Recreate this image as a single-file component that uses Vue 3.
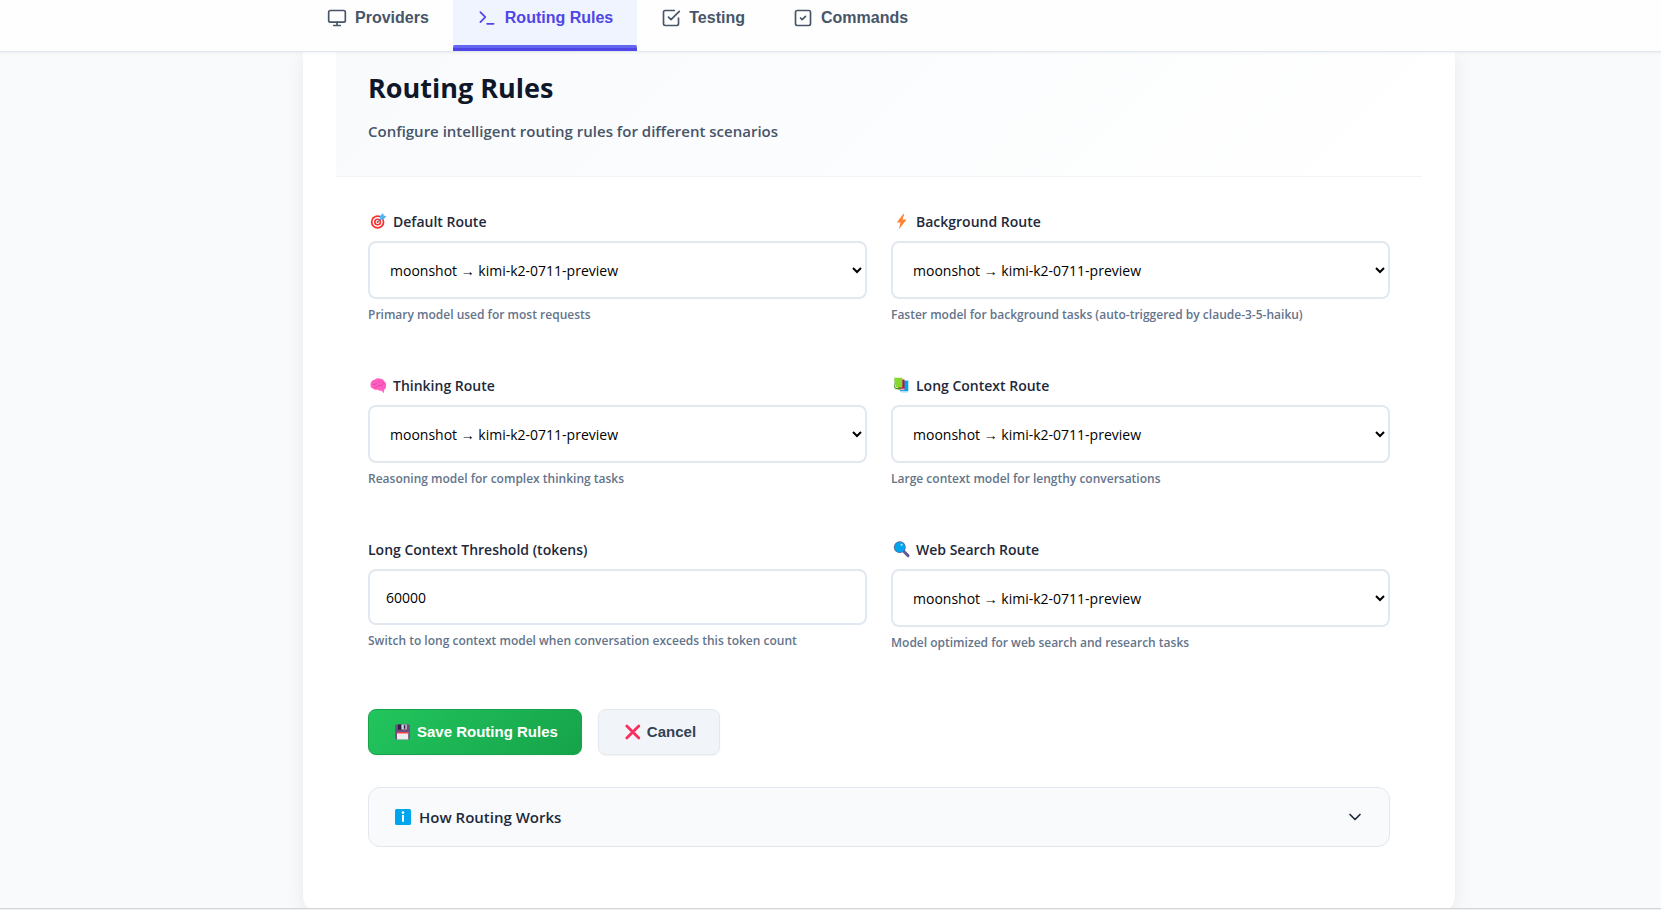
<script setup>
import { ref } from 'vue'

const tabs = [
  { id: 'providers', label: 'Providers' },
  { id: 'routing', label: 'Routing Rules' },
  { id: 'testing', label: 'Testing' },
  { id: 'commands', label: 'Commands' }
]
const active = ref('routing')

const model = 'moonshot → kimi-k2-0711-preview'
const fields = ref([
  { id: 'default', icon: 'target', label: 'Default Route', value: model, hint: 'Primary model used for most requests' },
  { id: 'background', icon: 'bolt', label: 'Background Route', value: model, hint: 'Faster model for background tasks (auto-triggered by claude-3-5-haiku)' },
  { id: 'thinking', icon: 'brain', label: 'Thinking Route', value: model, hint: 'Reasoning model for complex thinking tasks' },
  { id: 'long-context', icon: 'books', label: 'Long Context Route', value: model, hint: 'Large context model for lengthy conversations' },
  { id: 'threshold', number: true, label: 'Long Context Threshold (tokens)', value: 60000, hint: 'Switch to long context model when conversation exceeds this token count' },
  { id: 'web-search', icon: 'search', label: 'Web Search Route', value: model, hint: 'Model optimized for web search and research tasks' }
])
</script>

<template>
  <div class="page">
    <nav class="tabs">
      <button
        v-for="tab in tabs"
        :key="tab.id"
        type="button"
        class="tab"
        :class="{ active: active === tab.id }"
        @click="active = tab.id"
      >
        <svg class="line-icon" viewBox="0 0 24 24" aria-hidden="true">
          <template v-if="tab.id === 'providers'">
            <rect x="2" y="3" width="20" height="14" rx="2" />
            <path d="M8 21h8M12 17v4" />
          </template>
          <path v-else-if="tab.id === 'routing'" d="M4 17l6-6-6-6M12 19h8" />
          <path
            v-else-if="tab.id === 'testing'"
            d="M9 11l3 3L22 4M21 12v7a2 2 0 0 1-2 2H5a2 2 0 0 1-2-2V5a2 2 0 0 1 2-2h11"
          />
          <template v-else>
            <rect x="3" y="3" width="18" height="18" rx="2" />
            <path d="M9 12l2 2 4-4" />
          </template>
        </svg>
        {{ tab.label }}
      </button>
    </nav>

    <main class="content">
      <section class="card">
        <header class="head">
          <h1>Routing Rules</h1>
          <p>Configure intelligent routing rules for different scenarios</p>
        </header>

        <form class="body" @submit.prevent>
          <div class="grid">
            <div v-for="f in fields" :key="f.id" class="field">
              <label :for="f.id">
                <svg v-if="f.icon" class="emoji" viewBox="0 0 20 20" aria-hidden="true">
                  <template v-if="f.icon === 'target'">
                    <circle cx="8.6" cy="11" r="6.8" fill="#f8312f" />
                    <circle cx="8.6" cy="11" r="5" fill="#fff" />
                    <circle cx="8.6" cy="11" r="3.6" fill="#f8312f" />
                    <circle cx="8.6" cy="11" r="2" fill="#fff" />
                    <circle cx="8.6" cy="11" r="1" fill="#f8312f" />
                    <path d="M8.6 11l4.4-4.4" stroke="#3f5fa3" stroke-width="1" />
                    <path d="M11 8.6V5L14 2l.8 2.5 2.6.8-3 3.3z" fill="#50b5f2" />
                  </template>
                  <path v-else-if="f.icon === 'bolt'" d="M11.200 3L4.800 11.600h3.600L7 18.200l7.600-9.600h-4l1.600-5.600z" fill="#ff8330" />
                  <template v-else-if="f.icon === 'brain'">
                    <path
                      d="M6 4.400C7.400 2.800 10.200 2.900 11.400 3.700c1.800-.1 3.400 1 3.800 2.500 1.700 1 2.400 3.300 1.800 5 .1 1.700-.6 3-2 3.500l-.2 3.600-2.400-2.800c-1.700.5-3 .2-4-.9-1.800.6-3.600 0-4.400-1.200-1.900-.4-2.800-2-2.400-3.900C1.500 7 3.500 4.700 6 4.400z"
                      fill="#ff5fbf"
                    />
                    <path
                      d="M4 9.400c1.500.4 2.500 0 3.400-1M9 10.400c1.600.8 3.200.6 4.600-.6M11 5.800l-1.200 1.600M5.600 12.400c1.200.2 2-.2 2.800-1M13.400 7.600l1.600.6"
                      fill="none"
                      stroke="#d8289a"
                      stroke-width=".6"
                      stroke-linecap="round"
                    />
                  </template>
                  <template v-else-if="f.icon === 'books'">
                    <path d="M8 5.600h8.300v10.600H8z" fill="#00a6ed" />
                    <path d="M8.200 16.200h8v1.300h-7z" fill="#a9d8f2" />
                    <path d="M5.500 4.400h7v10.200h-6z" fill="#ca0b4a" />
                    <path d="M6 13.600h6.500v1.600H7z" fill="#e7a6b8" />
                    <path d="M2.200 2.800h8.200v9.800H3.600z" fill="#86d72f" />
                    <path d="M2.200 2.800v9.600l1.600 1.800h5.400v-1.200H3.800L3 12z" fill="#44911b" />
                  </template>
                  <template v-else>
                    <path d="M11.400 12l4.600 4.600" stroke="#635994" stroke-width="3" stroke-linecap="round" />
                    <circle cx="7.800" cy="8.200" r="5.900" fill="#635994" />
                    <circle cx="7.800" cy="8.200" r="5.200" fill="#00a6ed" />
                    <circle cx="9.600" cy="5.800" r="1" fill="#b9e5fb" />
                  </template>
                </svg>
                {{ f.label }}
              </label>
              <input v-if="f.number" :id="f.id" v-model="f.value" type="text" inputmode="numeric" />
              <select v-else :id="f.id" v-model="f.value">
                <option :value="model">{{ model }}</option>
              </select>
              <small>{{ f.hint }}</small>
            </div>
          </div>

          <div class="actions">
            <button type="submit" class="btn save">
              <svg class="emoji" viewBox="0 0 20 20" aria-hidden="true">
                <rect x="2.200" y="2.500" width="14.600" height="15" rx="1.400" fill="#6d4c86" />
                <path d="M5 2.500h9v5.200H5z" fill="#2b1f3b" />
                <path d="M8.400 2.500h5.400v5H8.400z" fill="#d9d5de" />
                <path d="M10.800 3.200h1.600v3.600h-1.600z" fill="#2b1f3b" />
                <path d="M4 10h11.200v7.500H4z" fill="#ececec" />
                <path d="M4 10h11.200v1.500H4z" fill="#f8433f" />
              </svg>
              Save Routing Rules
            </button>
            <button type="button" class="btn cancel">
              <svg class="emoji" viewBox="0 0 20 20" aria-hidden="true">
                <path d="M3.800 4l12 12M15.800 4l-12 12" stroke="#f92f60" stroke-width="2.800" stroke-linecap="round" />
              </svg>
              Cancel
            </button>
          </div>

          <details class="info">
            <summary>
              <svg class="emoji" viewBox="0 0 20 20" aria-hidden="true">
                <rect x="2" y="2" width="16" height="16" rx="1.500" fill="#00a6ed" />
                <circle cx="10" cy="5.600" r="1.300" fill="#fff" />
                <path d="M10 8v6.800" fill="none" stroke="#fff" stroke-width="2" />
              </svg>
              <span>How Routing Works</span>
              <svg class="line-icon chevron" viewBox="0 0 24 24" aria-hidden="true">
                <path d="M6 9l6 6 6-6" />
              </svg>
            </summary>
          </details>
        </form>
      </section>
    </main>
    <footer class="edge"></footer>
  </div>
</template>

<style>
body {
  margin: 0;
  background: #f8fafc;
}
</style>

<style scoped>
.page {
  display: flex;
  flex-direction: column;
  height: 100vh;
  overflow: hidden;
  box-sizing: border-box;
  background: #f8fafc;
  color: #1e293b;
  font-family: "Segoe UI", "Open Sans", "Noto Sans", sans-serif;
}
.page *,
.page *::before {
  box-sizing: border-box;
}
.tabs {
  position: relative;
  z-index: 1;
  display: flex;
  flex: none;
  height: 52px;
  padding-left: 303px;
  background: #fefefe;
  border-bottom: 1px solid #e2e8f0;
  box-shadow: 0 1px 3px rgba(0, 0, 0, 0.06);
}
.tab {
  position: relative;
  display: flex;
  align-items: center;
  gap: 8px;
  padding: 0 24px 15px;
  border: 0;
  background: none;
  color: #475569;
  font: 600 16px/20px "Liberation Sans", Arial, sans-serif;
  cursor: pointer;
}
.tab.active {
  background: #f0f4ff;
  border-bottom: 3px solid #4f46e5;
  padding-bottom: 12px;
  color: #4f46e5;
}
.tab.active::before {
  content: "";
  position: absolute;
  right: 0;
  bottom: 0;
  left: 0;
  height: 3px;
  border-radius: 2px 2px 0 0;
  background: #6366f1;
}
.line-icon {
  flex: none;
  width: 20px;
  height: 20px;
  fill: none;
  stroke: currentColor;
  stroke-width: 2;
  stroke-linecap: round;
  stroke-linejoin: round;
}
.emoji {
  flex: none;
  width: 20px;
  height: 20px;
}
.content {
  flex: 1;
  min-height: 0;
  padding: 0 206px 0 303px;
}
.card {
  padding: 0 32px 64px;
  border: 1px solid #fff;
  border-top: 0;
  border-radius: 0 0 16px 16px;
  background: #fff;
  box-shadow: 0 4px 20px rgba(0, 0, 0, 0.07);
}
.head {
  padding: 16px 32px 32px;
  border-bottom: 1px solid #f1f5f9;
  background: linear-gradient(135deg, #f8fafc 0%, #fff 100%);
}
h1 {
  margin: 0 0 10px;
  color: #0f172a;
  font-size: 27px;
  font-weight: 700;
  line-height: 40px;
}
.head p {
  margin: 0;
  color: #475569;
  font-size: 15px;
  font-weight: 600;
  line-height: 26px;
}
.body {
  padding: 32px 32px 0;
}
.grid {
  display: grid;
  grid-template-columns: repeat(2, minmax(0, 1fr));
  column-gap: 24px;
  row-gap: 48px;
}
.field {
  display: flex;
  flex-direction: column;
}
.field label {
  display: flex;
  align-items: center;
  gap: 4px;
  height: 24px;
  margin-bottom: 8px;
  font-size: 14px;
  font-weight: 600;
}
.field .emoji {
  margin-left: 1px;
}
.field select,
.field input {
  width: 100%;
  height: 58px;
  padding: 0 16px;
  border: 2px solid #e2e8f0;
  border-radius: 8px;
  background: #fff;
  color: #000;
  font-family: inherit;
  font-size: 14px;
}
.field input {
  height: 56px;
}
.field small {
  margin-top: 6px;
  color: #64748b;
  font-size: 12px;
  font-weight: 600;
  line-height: 20px;
}
.actions {
  display: flex;
  gap: 16px;
  margin-top: 56px;
}
.btn {
  display: flex;
  align-items: center;
  gap: 4px;
  height: 46px;
  padding: 0 23px 0 24px;
  border: 1px solid #e2e8f0;
  border-radius: 8px;
  background: #f1f5f9;
  box-shadow: 0 1px 2px rgba(0, 0, 0, 0.05);
  color: #334155;
  font: 600 15px/20px "Liberation Sans", Arial, sans-serif;
  cursor: pointer;
}
.btn.save {
  border-color: #16a34a;
  background: linear-gradient(135deg, #22c55e, #16a34a);
  color: #fff;
}
.info {
  margin-top: 32px;
  border: 1px solid #e2e8f0;
  border-radius: 12px;
  background: #f8fafc;
}
.info summary {
  display: flex;
  align-items: center;
  gap: 6px;
  height: 58px;
  padding: 0 24px;
  font-size: 15px;
  font-weight: 600;
  list-style: none;
  cursor: pointer;
}
.chevron {
  margin-left: auto;
}
.edge {
  position: relative;
  z-index: 1;
  flex: none;
  height: 2px;
  border-top: 1px solid #d4d6d8;
  background: #f0f0f0;
}
</style>
